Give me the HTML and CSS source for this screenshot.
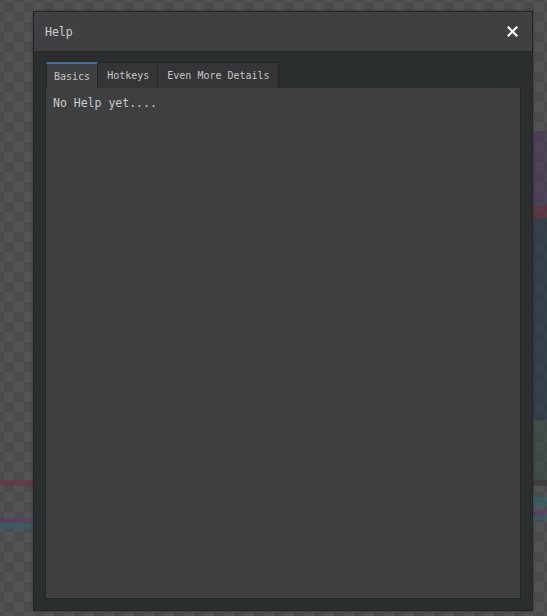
FILE: index.html
```html
<!DOCTYPE html>
<html lang="en">
<head>
    <meta charset="UTF-8">
    <meta name="viewport" content="width=device-width, initial-scale=1.0">
    <title>Help</title>
    <link rel="stylesheet" href="styles.css">
</head>
<body>
    <div id="canvas">
        <div class="band band-purple"></div>
        <div class="band band-red"></div>
        <div class="band band-slate"></div>
        <div class="band band-moss"></div>
        <div class="band band-dark"></div>
        <div class="band band-teal"></div>
        <div class="band band-violet"></div>
        <div class="band band-teal2"></div>
        <div class="band band-rose"></div>
        <div class="band band-violet-l"></div>
        <div class="band band-teal-l"></div>
    </div>

    <div id="helpDialog" class="dialog">
        <div class="dialog-head">
            <span class="dialog-title">Help</span>
            <button class="dialog-close" type="button">
                <svg width="11" height="11" viewBox="0 0 11 11">
                    <path d="M1.5 1.5 L9.5 9.5 M9.5 1.5 L1.5 9.5" stroke="#f2f2f2" stroke-width="2.2" stroke-linecap="square"/>
                </svg>
            </button>
        </div>
        <div class="dialog-body">
            <ul class="tabs">
                <li class="tab active">Basics</li>
                <li class="tab">Hotkeys</li>
                <li class="tab">Even More Details</li>
            </ul>
            <div class="tab-panel">No Help yet....</div>
        </div>
    </div>
</body>
</html>
```
FILE: styles.css
```css
* {
    box-sizing: border-box;
}
body {
    margin: 0;
    width: 547px;
    height: 616px;
    overflow: hidden;
    font-family: "DejaVu Sans Mono", "Liberation Mono", monospace;
    background-color: #4b4c4e;
    background-image: conic-gradient(#525355 25%, #4b4c4e 0 50%, #525355 0 75%, #4b4c4e 0);
    background-size: 20px 20px;
    background-position: 4px 2px;
}

/* tracks drawn on the canvas behind the dialog */
#canvas {
    position: relative;
    width: 547px;
    height: 616px;
    overflow: hidden;
}
.band {
    position: absolute;
    left: 533px;
    right: 0;
}
.band-purple { top: 131px; height: 74px; background: rgba(74, 52, 90, 0.45); }
.band-red { top: 205px; height: 13px; background: rgba(100, 40, 60, 0.6); }
.band-slate { top: 218px; height: 202px; background: rgba(40, 55, 70, 0.65); }
.band-moss { top: 420px; height: 60px; background: rgba(55, 72, 66, 0.55); }
.band-dark { top: 480px; height: 6px; background: rgba(60, 58, 58, 0.8); }
.band-teal { top: 497px; height: 10px; background: rgba(50, 100, 105, 0.6); }
.band-violet { top: 510px; height: 5px; background: rgba(100, 60, 105, 0.6); }
.band-teal2 { top: 515px; height: 5px; background: rgba(50, 100, 105, 0.6); }
.band-rose { top: 480px; height: 6px; left: 0; right: auto; width: 33px; background: rgba(110, 50, 60, 0.55); }
.band-violet-l { top: 518px; height: 5px; left: 0; right: auto; width: 33px; background: rgba(95, 55, 105, 0.55); }
.band-teal-l { top: 523px; height: 6px; left: 0; right: auto; width: 33px; background: rgba(45, 100, 105, 0.6); }

/* modal */
.dialog {
    position: absolute;
    left: 33px;
    top: 11px;
    width: 500px;
    height: 600px;
    display: flex;
    flex-direction: column;
    background: #2b2e2f;
    border: 1px solid #222425;
    box-shadow: 0 0 3px rgba(0, 0, 0, 0.3);
}
.dialog-head {
    height: 39px;
    display: flex;
    align-items: center;
    justify-content: space-between;
    padding: 0 14px 0 11px;
    background: #3f4042;
}
.dialog-title {
    font-size: 11.5px;
    color: #cfcfcf;
    padding-top: 1px;
}
.dialog-close {
    border: none;
    background: none;
    padding: 0;
    width: 11px;
    height: 11px;
    display: flex;
    cursor: pointer;
}
.dialog-body {
    flex-grow: 1;
    display: flex;
    flex-direction: column;
    padding: 11px;
}

/* tabs */
.tabs {
    list-style: none;
    margin: 0 0 0 1px;
    padding: 0;
    display: flex;
    height: 26px;
}
.tab {
    padding: 1px 8px 0 9px;
    font-size: 10px;
    line-height: 24px;
    color: #c6c6c6;
    background: #333537;
    border: 1px solid #232526;
    border-left: none;
    border-bottom: none;
}
.tab.active {
    background: #3e3f41;
    border: 1px solid #232526;
    border-top: 2px solid #4c6a9a;
    border-bottom: none;
    padding: 1px 7px 0;
    line-height: 23px;
}
.tab-panel {
    flex-grow: 1;
    padding: 8px 7px;
    font-size: 11.5px;
    color: #cbcbcb;
    background: #3e3f41;
    border: 1px solid #232526;
    border-top: none;
}
```
